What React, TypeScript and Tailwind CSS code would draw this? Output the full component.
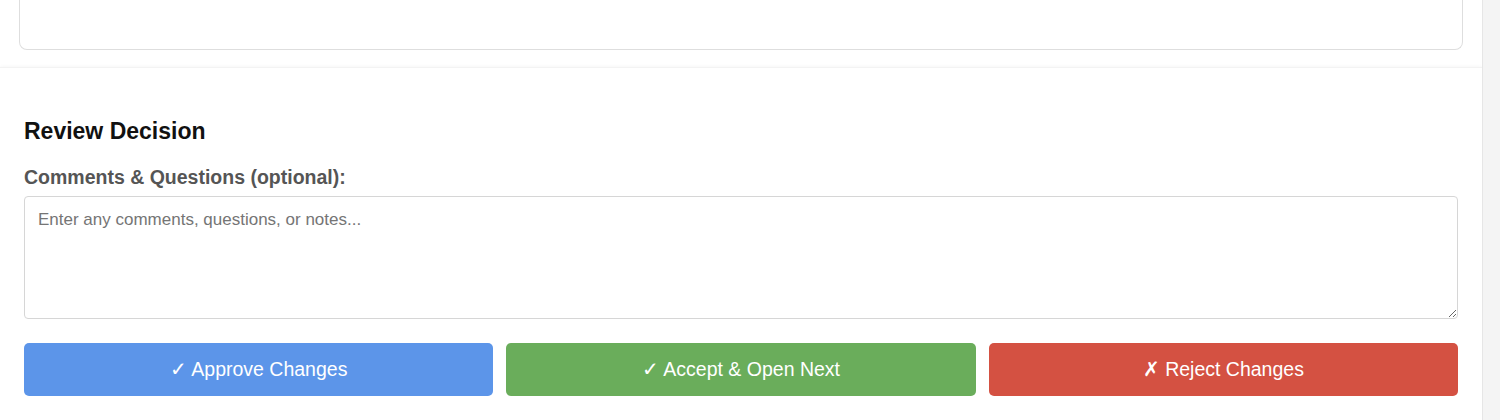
import React, { useState } from 'react';

export default function App() {
  const [comments, setComments] = useState('');

  return (
    <div className="flex h-[420px] w-[1500px] overflow-hidden bg-white font-['Liberation_Sans',Arial,sans-serif]">
      <div className="flex w-[1482px] flex-col">
        {/* previous panel, cut off at the top */}
        <div className="px-[19px] pb-[17px]">
          <div className="h-[50px] rounded-b-lg border border-t-0 border-[#dedede] bg-white" />
        </div>

        {/* review decision */}
        <div className="flex-1 border-t border-[#f3f3f3] bg-white px-[24px] pt-[24px] shadow-[0_-1px_3px_rgba(0,0,0,0.03)]">
          <h3 className="mt-[25px] mb-[20px] text-[23px] leading-[28px] font-bold text-[#111]">
            Review Decision
          </h3>
          <label className="block text-[19.5px] leading-[24px] font-bold text-[#555]">
            Comments &amp; Questions (optional):
          </label>
          <textarea
            value={comments}
            onChange={(e) => setComments(e.currentTarget.value)}
            placeholder="Enter any comments, questions, or notes..."
            className="mt-[7px] block h-[123px] w-full rounded-[4px] border border-[#d6d6d6] px-[13px] py-[13px] text-[17px] leading-[20px] text-[#333] outline-none placeholder:text-[#757575]"
          />
          <div className="mt-[24px] grid grid-cols-3 gap-[13px]">
            <button className="h-[53px] rounded-[5px] bg-[#5c95e9] text-[19.5px] text-white">
              ✓ Approve Changes
            </button>
            <button className="h-[53px] rounded-[5px] bg-[#6aad5b] text-[19.5px] text-white">
              ✓ Accept &amp; Open Next
            </button>
            <button className="h-[53px] rounded-[5px] bg-[#d45142] text-[19.5px] text-white">
              ✗ Reject Changes
            </button>
          </div>
        </div>
      </div>
      <div className="w-[18px] border-l border-[#e6e6e6] bg-[#f4f4f4]" />
    </div>
  );
}
